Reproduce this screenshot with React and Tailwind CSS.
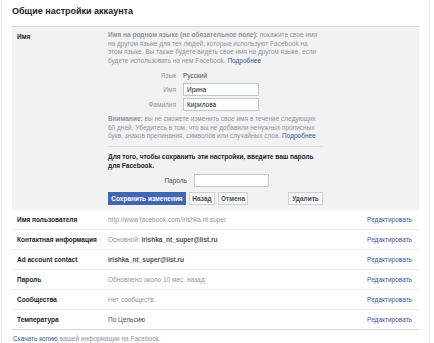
import React from 'react';

const rows = [
  { label: 'Имя пользователя', value: <span className="text-[#90949c]">http://www.facebook.com/irishka.nt.super</span> },
  {
    label: 'Контактная информация',
    value: (
      <span className="text-[#90949c]">
        Основной: <span className="font-bold text-[#4b4f56]">irishka_nt_super@list.ru</span>
      </span>
    ),
  },
  { label: 'Ad account contact', value: <span className="font-bold text-[#4b4f56]">irishka_nt_super@list.ru</span> },
  { label: 'Пароль', value: <span className="text-[#90949c]">Обновлено около 10 мес. назад</span> },
  { label: 'Сообщества', value: <span className="text-[#90949c]">Нет сообществ.</span> },
  { label: 'Температура', value: <span className="text-[#4b4f56]">По Цельсию</span> },
];

const Field = ({ label, children }) => (
  <div className="flex items-center">
    <div className="w-[68px] text-right text-[#90949c]">{label}</div>
    <div className="ml-[7px]">{children}</div>
  </div>
);

export default function App() {
  return (
    <div className="w-[434px] h-[343px] bg-white overflow-hidden text-[6.5px] text-[#1d2129]" style={{ fontFamily: '"Liberation Sans", Arial, sans-serif' }}>
      <div className="ml-[1px] w-[429px] h-full border-x border-[#e5e6e9] px-[10px]">
        <h1 className="pt-[5px] h-[26px] text-[9px] leading-[13px] font-bold text-[#1d2129]">Общие настройки аккаунта</h1>

        <div className="flex bg-[#f2f2f2] border-t border-[#d6d7da] pt-[4px] pb-[5px]">
          <div className="w-[96px] pl-[5px] pt-[1px] leading-[9px] font-bold">Имя</div>
          <div className="w-[215px]">
            <p className="leading-[8.7px] text-[#90949c]">
              <span className="font-bold">Имя на родном языке (не обязательное поле):</span> покажите свое имя<br />
              на другом языке для тех людей, которые используют Facebook на<br />
              этом языке. Вы также будете видеть свое имя на другом языке, если<br />
              будете использовать на нем Facebook. <span className="text-[#365899]">Подробнее</span>
            </p>

            <div className="mt-[5px] flex flex-col gap-[2px] leading-[9px]">
              <Field label="Язык">
                <span className="text-[#4b4f56]">Русский</span>
              </Field>
              <div className="mt-[1px]">
                <Field label="Имя">
                  <div className="w-[76px] h-[13px] border border-[#bdc7d8] bg-white pl-[3px] leading-[11px] text-[#1d2129]">Ирина</div>
                </Field>
              </div>
              <Field label="Фамилия">
                <div className="w-[76px] h-[13px] border border-[#bdc7d8] bg-white pl-[3px] leading-[11px] text-[#1d2129]">Кирилова</div>
              </Field>
            </div>

            <p className="mt-[4px] leading-[8.7px] text-[#90949c]">
              <span className="font-bold">Внимание:</span> вы не сможете изменить свое имя в течение следующих<br />
              60 дней. Убедитесь в том, что вы не добавили ненужных прописных<br />
              букв, знаков препинания, символов или случайных слов. <span className="text-[#365899]">Подробнее</span>
            </p>

            <div className="mt-[5px] border-t border-[#dddfe2]" />

            <p className="mt-[5px] leading-[9.5px] font-bold text-[#1d2129]">
              Для того, чтобы сохранить эти настройки, введите ваш пароль<br />
              для Facebook.
            </p>

            <div className="mt-[3px] flex items-center">
              <div className="w-[79px] text-right text-[#4b4f56]">Пароль</div>
              <div className="ml-[7px] w-[75px] h-[13px] border border-[#bdc7d8] bg-white" />
            </div>

            <div className="mt-[5px] flex items-center gap-[3px] font-bold leading-[11px]">
              <button className="w-[78px] h-[13px] border border-[#4267b2] bg-[#4267b2] text-white">Сохранить изменения</button>
              <button className="w-[26px] h-[13px] border border-[#ced0d4] bg-[#f6f7f9] text-[#4b4f56]">Назад</button>
              <button className="w-[30px] h-[13px] border border-[#ced0d4] bg-[#f6f7f9] text-[#4b4f56]">Отмена</button>
              <button className="ml-auto w-[35px] h-[13px] border border-[#ced0d4] bg-[#f6f7f9] text-[#4b4f56]">Удалить</button>
            </div>
          </div>
        </div>

        <div>
          {rows.map((r, i) => (
            <div
              key={r.label}
              className={
                i === rows.length - 1
                  ? 'flex items-center h-[20px] border-b border-[#d6d7da]'
                  : 'flex items-center h-[20px] border-b border-[#e9ebee]'
              }
            >
              <div className="w-[96px] pl-[5px] font-bold text-[#1d2129]">{r.label}</div>
              <div className="flex-1">{r.value}</div>
              <div className="pr-[7px] text-[#365899]">Редактировать</div>
            </div>
          ))}
        </div>

        <div className="pt-[4px] pl-[1px] leading-[9px] text-[#90949c]">
          <span className="text-[#365899]">Скачать копию</span> вашей информации на Facebook.
        </div>
      </div>
    </div>
  );
}
